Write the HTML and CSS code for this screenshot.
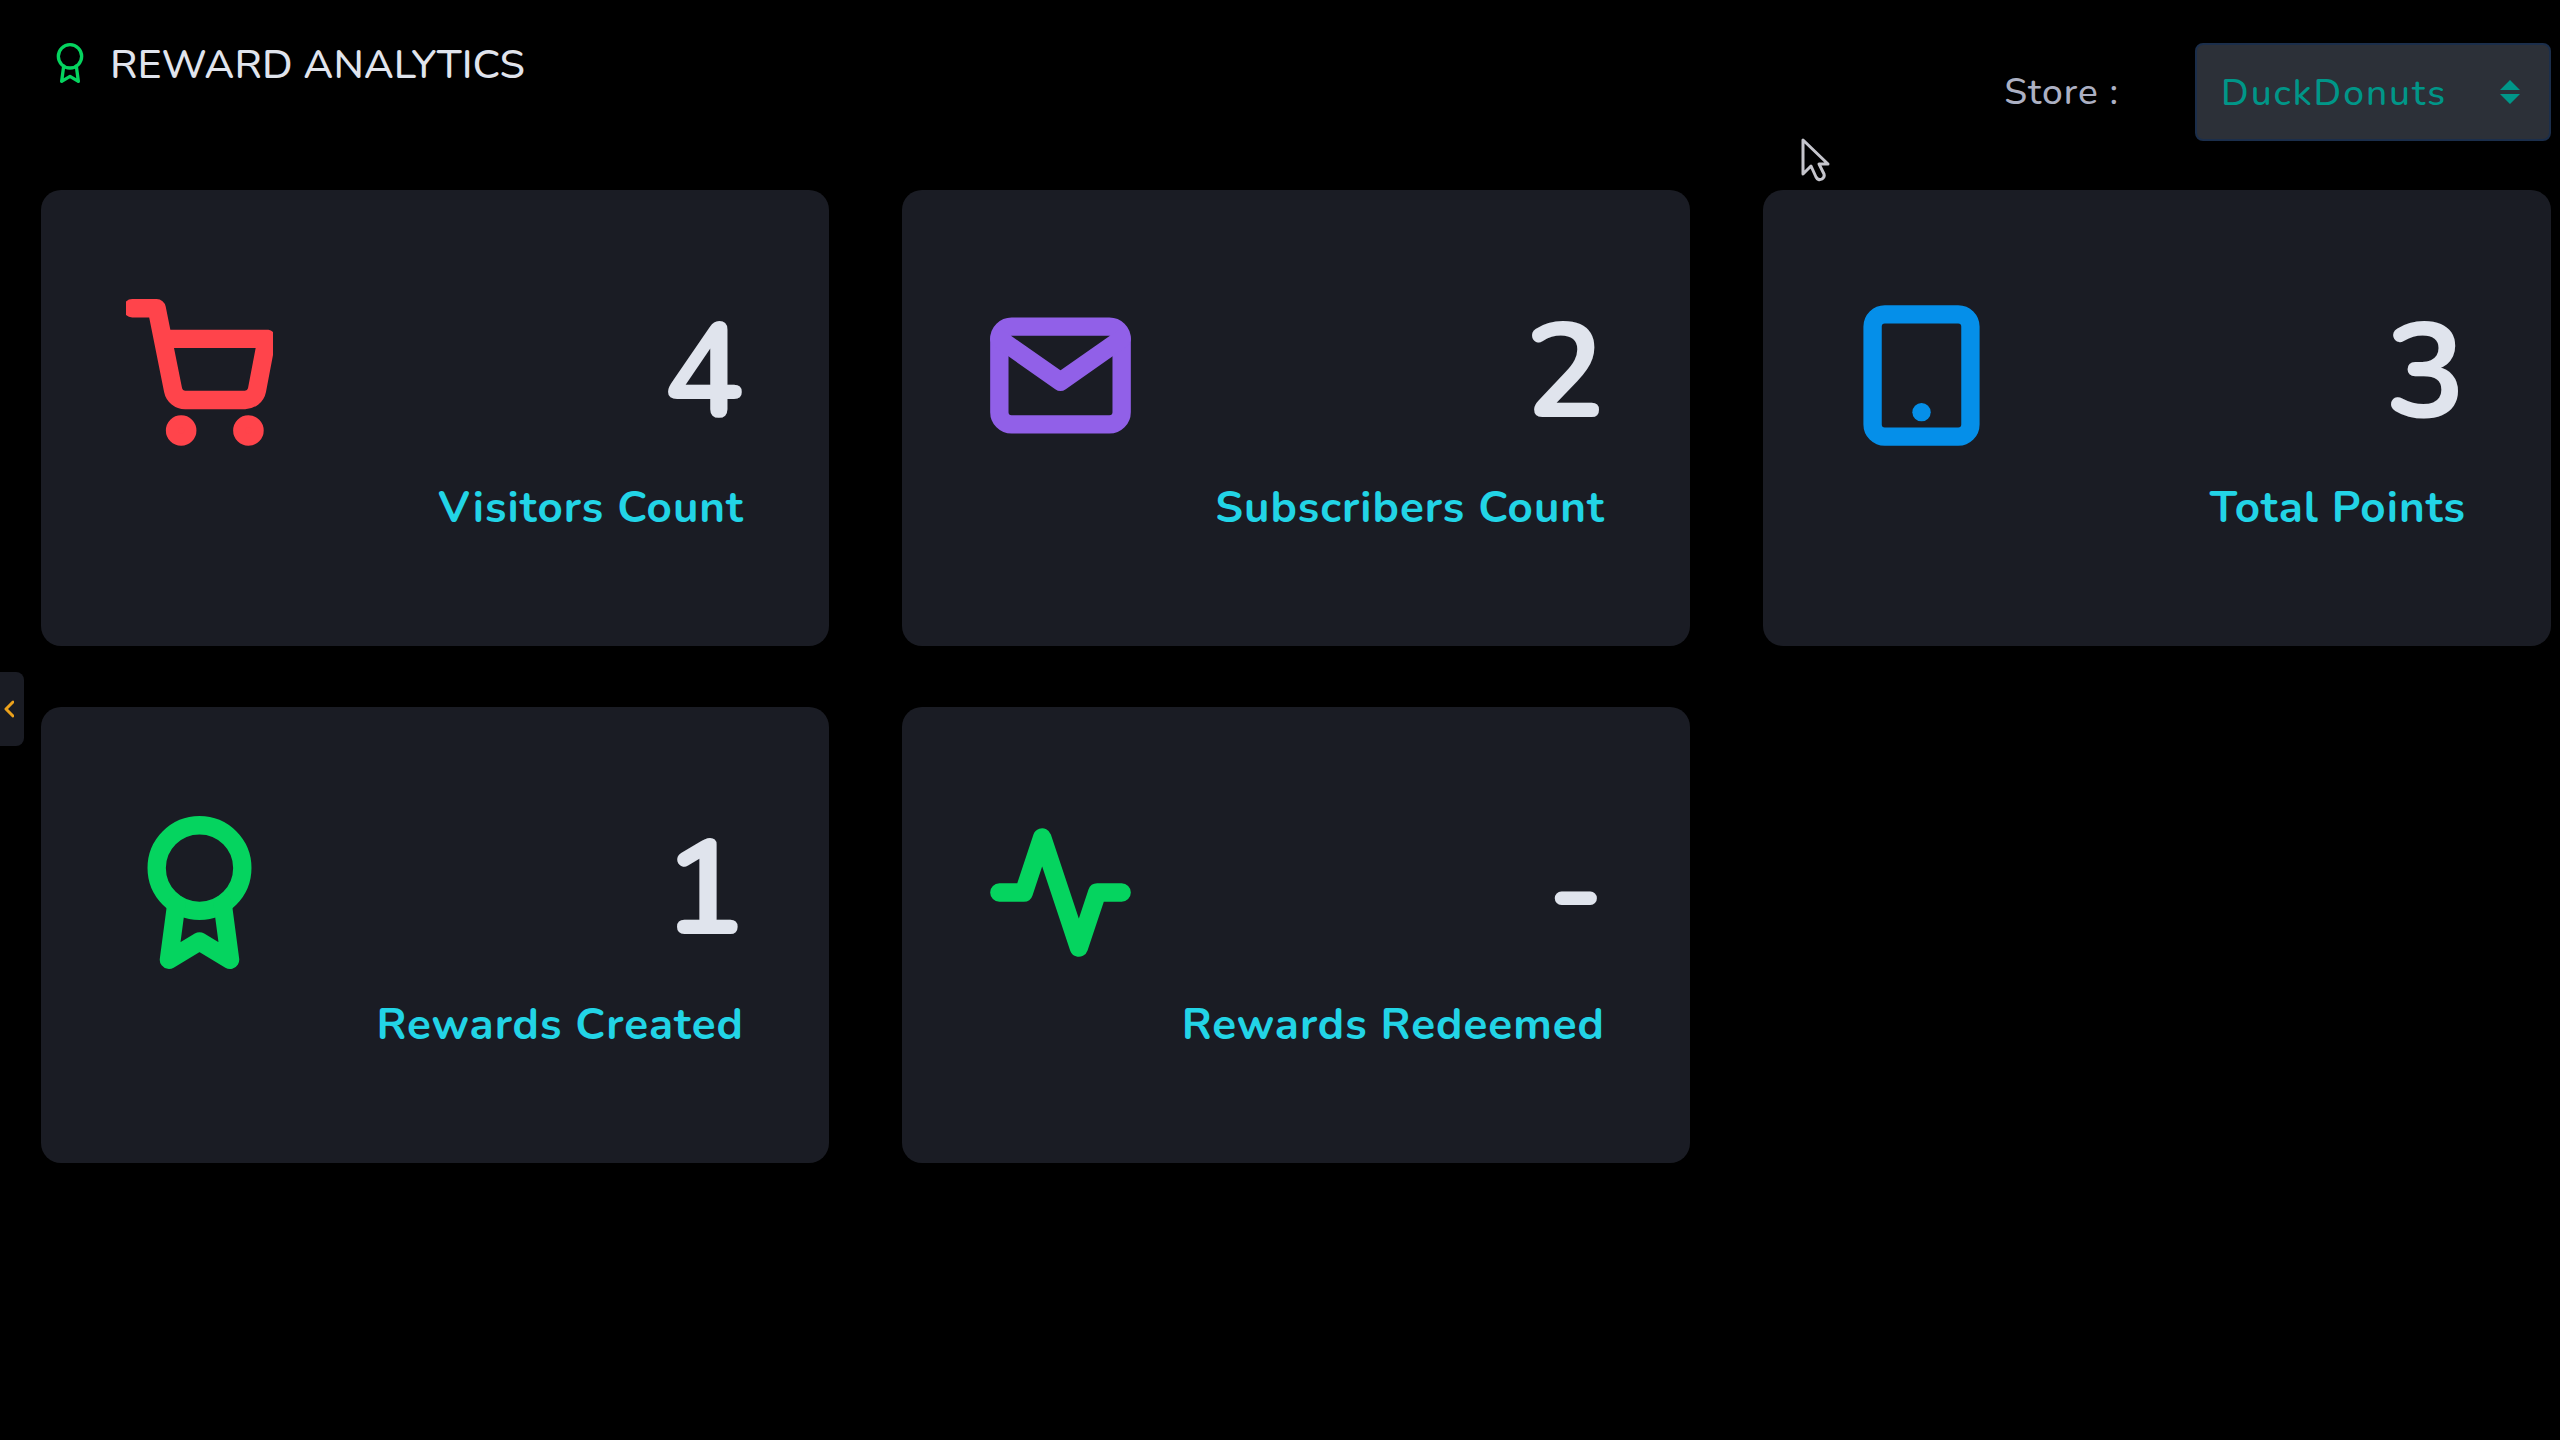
FILE: index.html
```html
<!DOCTYPE html>
<html lang="en">
<head>
<meta charset="utf-8">
<title>Reward Analytics</title>
<meta name="viewport" content="width=device-width, initial-scale=1">
<link rel="stylesheet" href="styles.css">
</head>
<body>
<button class="drawer-toggle" type="button" aria-label="Open side panel">
  <svg class="drawer-icon" viewBox="0 0 10 18" aria-hidden="true"><path d="M9 2 2 9l7 7"/></svg>
</button>
<main class="page">
  <header class="header">
    <h1 class="title">
      <svg class="title-icon" viewBox="0 0 24 24" aria-hidden="true"><circle cx="12" cy="8" r="7"/><path d="M8.21 13.89 7 23l5-3 5 3-1.21-9.12"/></svg>
      REWARD ANALYTICS
    </h1>
    <div class="store">
      <label class="store-label" for="store">Store :</label>
      <div class="store-field">
        <select class="store-select" id="store"><option>DuckDonuts</option></select>
        <svg class="store-arrows" viewBox="0 0 20 26" aria-hidden="true"><path d="M10 1 20 11H0zM0 15h20L10 25z"/></svg>
      </div>
    </div>
  </header>
  <section class="cards">
    <article class="card">
      <svg class="card-icon red" viewBox="0 -1 24 26" aria-hidden="true"><circle class="wheel" cx="9" cy="21" r="1"/><circle class="wheel" cx="20" cy="21" r="1"/><path d="M1 1h4l2.68 13.39a2 2 0 0 0 2 1.61h9.72a2 2 0 0 0 2-1.61L23 6H6"/></svg>
      <div class="stat"><p class="value">4</p><h2 class="label">Visitors Count</h2></div>
    </article>
    <article class="card">
      <svg class="card-icon purple" viewBox="0 -1 24 26" aria-hidden="true"><path d="M4 4h16c1.100 0 2 .9 2 2v12c0 1.100-.9 2-2 2H4c-1.100 0-2-.9-2-2V6c0-1.100.9-2 2-2z"/><path d="m22 6-10 7L2 6"/></svg>
      <div class="stat"><p class="value">2</p><h2 class="label">Subscribers Count</h2></div>
    </article>
    <article class="card">
      <svg class="card-icon blue" viewBox="0 -1 24 26" aria-hidden="true"><rect x="4" y="2" width="16" height="20" rx="2"/><path d="M12 18h.01"/></svg>
      <div class="stat"><p class="value">3</p><h2 class="label">Total Points</h2></div>
    </article>
    <article class="card">
      <svg class="card-icon green" viewBox="0 -1 24 26" aria-hidden="true"><circle cx="12" cy="8" r="7"/><path d="M8.210 13.890 7 23l5-3 5 3-1.210-9.120"/></svg>
      <div class="stat"><p class="value">1</p><h2 class="label">Rewards Created</h2></div>
    </article>
    <article class="card">
      <svg class="card-icon green" viewBox="0 -1 24 26" aria-hidden="true"><path d="M22 12h-4l-3 9L9 3l-3 9H2"/></svg>
      <div class="stat"><p class="value">-</p><h2 class="label">Rewards Redeemed</h2></div>
    </article>
  </section>
</main>
<svg class="pointer" viewBox="0 0 30 45" aria-hidden="true"><path d="M3 3v34l8-8 5 11q2 4 6 2 3-2 2-5l-5-10h9z"/></svg>
</body>
</html>
```
FILE: styles.css
```css
* {
  box-sizing: border-box;
}

body {
  margin: 0;
  min-height: 100vh;
  background: #000;
  color: #e0e4ed;
  font-family: Nunito, "Open Sans", "Noto Sans", sans-serif;
}

svg {
  display: block;
  fill: none;
  stroke: currentColor;
  stroke-linecap: round;
  stroke-linejoin: round;
}

.page {
  padding: 43px 9px 61px 41px;
}

.header {
  display: flex;
  align-items: flex-start;
  justify-content: space-between;
  margin-bottom: 49px;
}

.title {
  display: flex;
  align-items: flex-start;
  gap: 20px;
  margin: 0;
  padding-left: 9px;
  font-size: 41px;
  font-weight: 500;
  line-height: 44px;
}

.title-icon {
  width: 40px;
  height: 40px;
  color: #05d45f;
  stroke-width: 2;
}

.store {
  display: flex;
  align-items: center;
  gap: 76px;
}

.store-label {
  color: #acb0c3;
  font-size: 37px;
  font-weight: 500;
  letter-spacing: 1px;
}

.store-field {
  position: relative;
  width: 356px;
}

.store-select {
  width: 100%;
  height: 98px;
  padding: 2px 64px 0 24px;
  appearance: none;
  border: 2px solid #1b2e4b;
  border-radius: 8px;
  background: #2c3038;
  color: #009688;
  font: inherit;
  font-size: 37px;
  font-weight: 500;
  letter-spacing: 2px;
}

.store-arrows {
  position: absolute;
  top: 36px;
  right: 31px;
  width: 20px;
  height: 26px;
  fill: #009688;
  stroke: none;
  pointer-events: none;
}

.cards {
  display: grid;
  grid-template-columns: repeat(3, 1fr);
  gap: 61px 73px;
}

.card {
  display: flex;
  align-items: flex-start;
  justify-content: space-between;
  min-height: 456px;
  padding: 106px 85px 85px;
  border-radius: 20px;
  background: #1a1c24;
}

.card-icon {
  flex: none;
  width: 147px;
  height: 159px;
  stroke-width: 3;
}

.wheel {
  fill: currentColor;
}

.red { color: #ff444b; }
.purple { color: #9160e8; }
.blue { color: #058fe9; }
.green { color: #05d45f; }

.stat {
  text-align: right;
  white-space: nowrap;
}

.value {
  margin: 0 0 27px;
  font-size: 134px;
  font-weight: 700;
  line-height: 155px;
}

.label {
  margin: 0;
  color: #22d4e6;
  font-size: 44px;
  font-weight: 700;
  line-height: 60px;
  letter-spacing: 1px;
}

.drawer-toggle {
  position: fixed;
  top: 672px;
  left: 0;
  width: 24px;
  height: 74px;
  padding: 0 0 0 4px;
  border: 0;
  border-radius: 0 8px 8px 0;
  background: #1a1c24;
  color: #eba11c;
}

.drawer-icon {
  width: 10px;
  height: 18px;
  stroke-width: 3;
}

.pointer {
  position: absolute;
  top: 137px;
  left: 1800px;
  width: 30px;
  height: 45px;
  fill: #000;
  color: #c5c5cc;
  stroke-width: 3;
}
```
